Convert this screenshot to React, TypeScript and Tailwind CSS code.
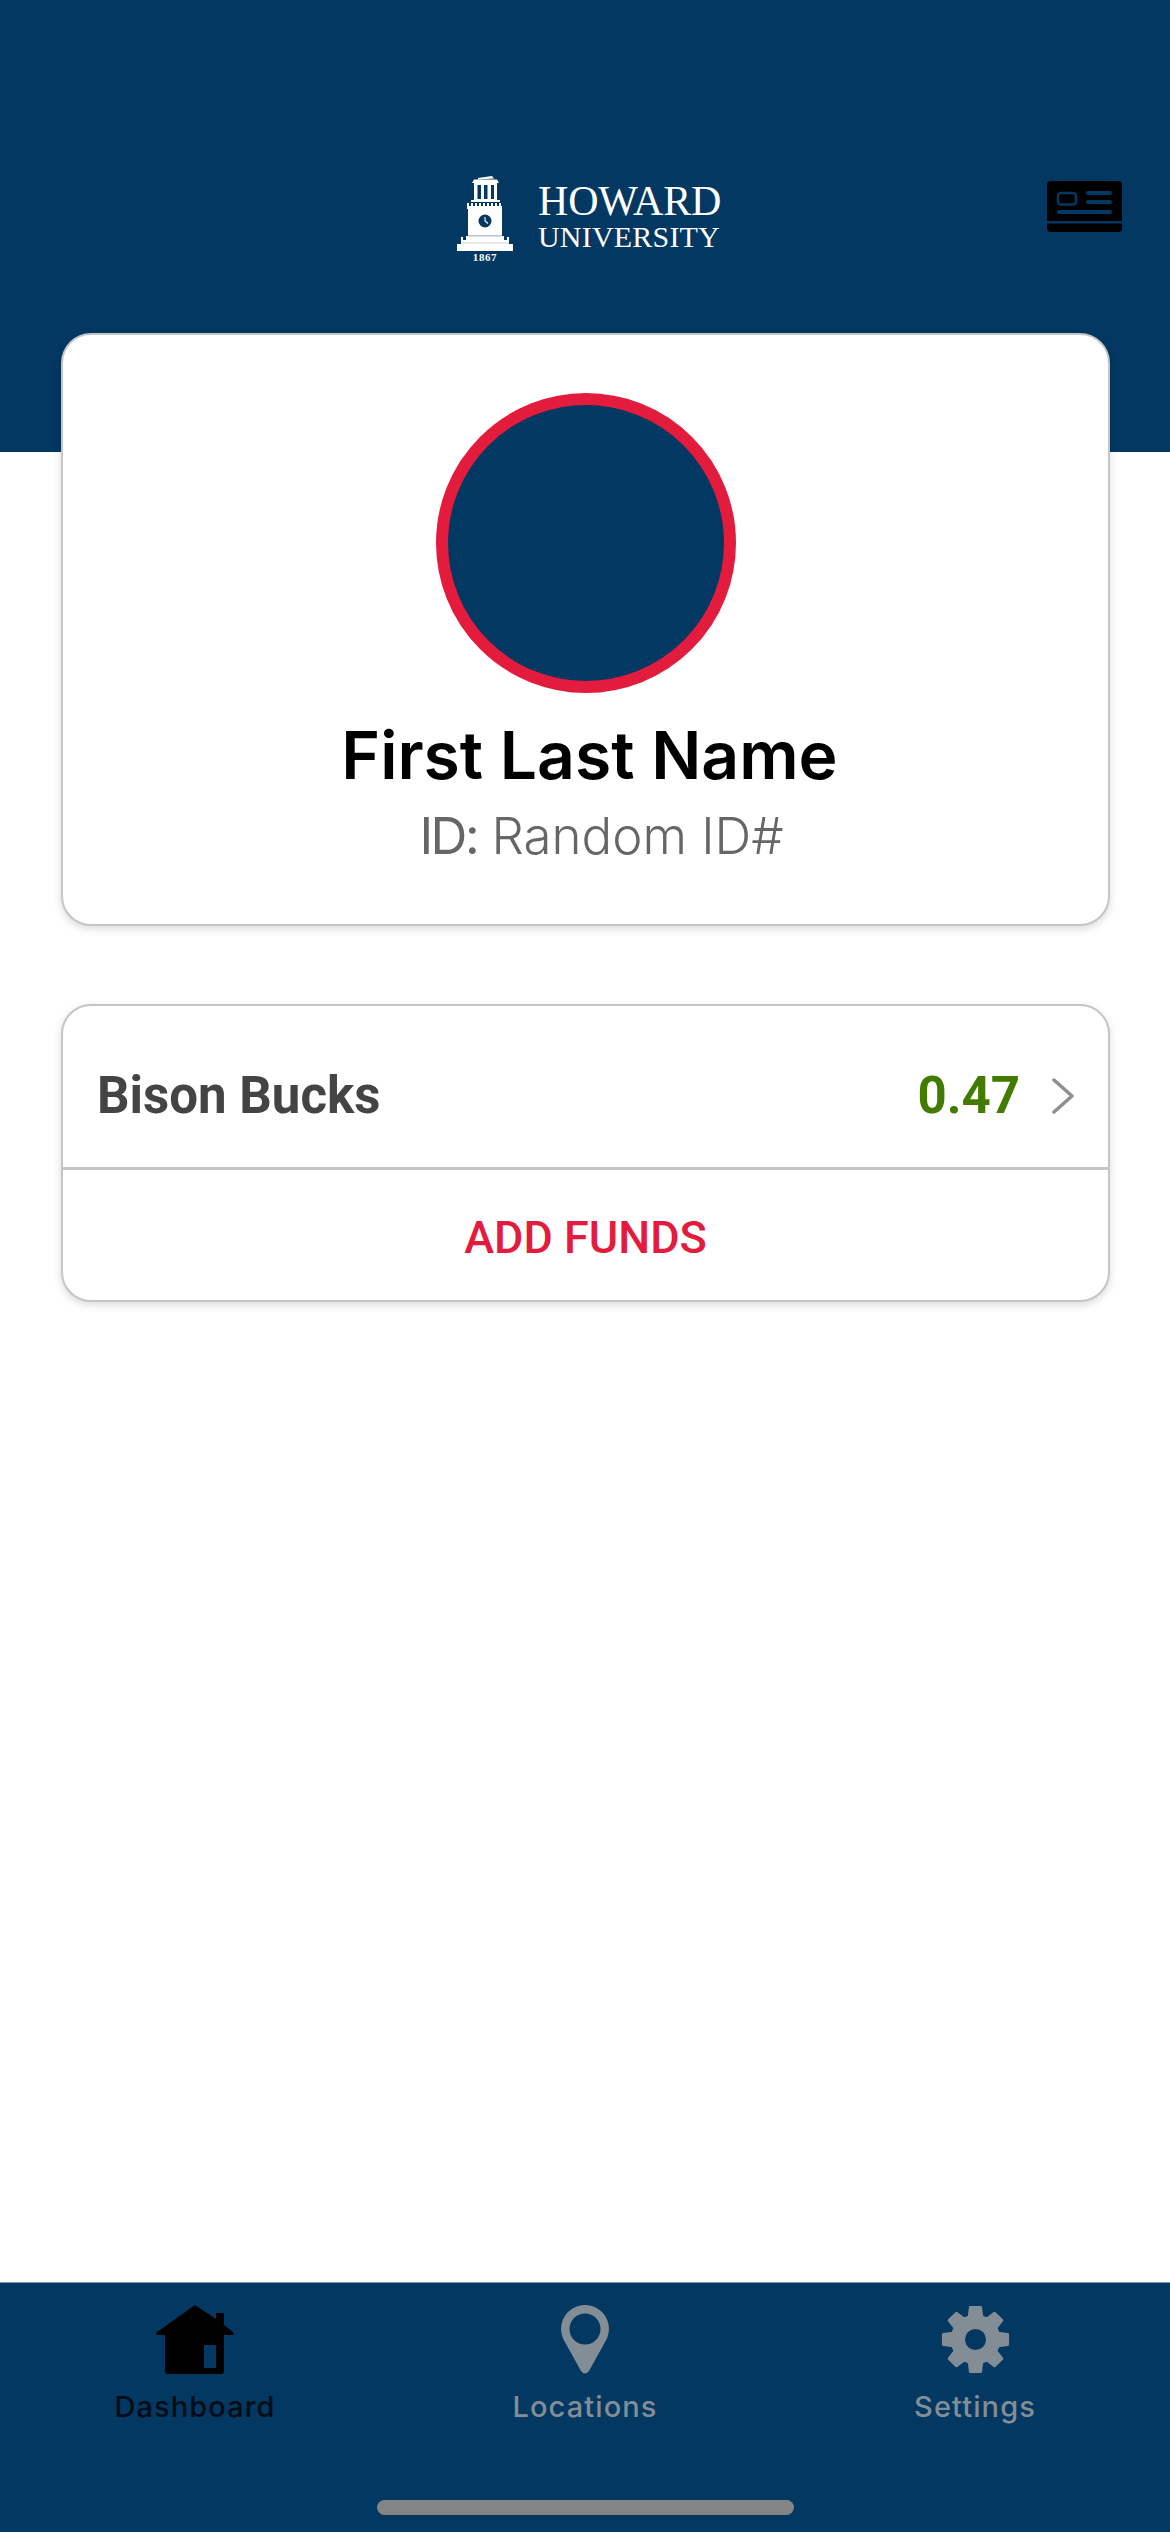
const NAVY = "#023861";

function Tower() {
  return (
    <svg width="56" height="75" viewBox="0 0 56 75" fill="#ffffff" className="block">
      <path d="M21 2 L35 0 L37 2.500 L21 3.500 Z" />
      <path d="M17 3.500 H40 L42 7 H15 Z" />
      <path fillRule="evenodd" d="M17 7 H40 V25 H17 Z M20.500 9 V23 H24 V9 Z M27 9 V23 H30.500 V9 Z M34 9 V23 H37 V9 Z" />
      <path d="M14 24h29v2H14z" />
      <path d="M10 27h2v3h-2zM14 27h2v3h-2zM18 27h2v3h-2zM22 27h2v3h-2zM26 27h2v3h-2zM30 27h2v3h-2zM34 27h2v3h-2zM38 27h2v3h-2zM42 27h2v3h-2z" />
      <path d="M10 30h35v3H10z" />
      <path fillRule="evenodd" d="M11 33 H45 V60 H47 V64 H50 V61 H52 V68 H56 V75 H0 V68 H4 V61 H6 V64 H9 V60 H11 Z M28 38.500 A6.500 6.500 0 1 0 28 51.500 A6.500 6.500 0 1 0 28 38.500 Z" />
      <path d="M28 41 V45 L31 47.500" fill="none" stroke="#ffffff" strokeWidth="1.100" />
      <path d="M11 59h34v1.500H11z" fill="#b9c6d1" />
      <path d="M4 66.500h48v1H4z" fill="#c9d3dc" />
    </svg>
  );
}

function IdIcon() {
  return (
    <svg width="75" height="51" viewBox="0 0 75 51" className="block">
      <path d="M4 0h67a4 4 0 0 1 4 4v36H0V4a4 4 0 0 1 4-4z" fill="#000000" />
      <path d="M0 42.500h75V47a4 4 0 0 1-4 4H4a4 4 0 0 1-4-4z" fill="#000000" />
      <rect x="11" y="12" width="18" height="11.500" rx="3" fill="none" stroke={NAVY} strokeWidth="2.500" />
      <rect x="39" y="10" width="26" height="4" rx="2" fill={NAVY} />
      <rect x="39" y="19" width="26" height="4" rx="2" fill={NAVY} />
      <rect x="10" y="29" width="55" height="4" rx="2" fill={NAVY} />
    </svg>
  );
}

function HomeIcon() {
  return (
    <svg width="78" height="69" viewBox="0 0 78 69" fill="#000000" className="block">
      <path fillRule="evenodd" d="M39 0 L60 14 V8 H68 V20 L77 27 Q79 30 76 30 H68 V66 Q68 69 65 69 H12 Q9 69 9 66 V30 H2 Q-1 30 1 27 Z M48 40 H60 V63 H48 Z" />
    </svg>
  );
}

function PinIcon() {
  return (
    <svg width="48" height="69" viewBox="0 0 48 69" fill="#838d96" className="block">
      <path fillRule="evenodd" d="M24 0 A24 24 0 0 1 45.500 34.500 L28 66 Q24 71 20 66 L2.500 34.500 A24 24 0 0 1 24 0 Z M24 8.500 A15.500 15.500 0 1 0 24 39.500 A15.500 15.500 0 1 0 24 8.500 Z" />
    </svg>
  );
}

function gearPath() {
  const c = 34.5;
  const pt = (r: number, deg: number) => {
    const a = ((deg - 90) * Math.PI) / 180;
    return `${(c + r * Math.cos(a)).toFixed(2)} ${(c + r * Math.sin(a)).toFixed(2)}`;
  };
  let d = "";
  for (let i = 0; i < 8; i++) {
    const t = i * 45;
    d += `${i === 0 ? "M" : "L"}${pt(23.5, t - 15.5)} L${pt(32.5, t - 9)} L${pt(32.5, t + 9)} L${pt(23.5, t + 15.5)} `;
  }
  d += "Z";
  d += ` M${c} ${c - 10} A10 10 0 1 0 ${c} ${c + 10} A10 10 0 1 0 ${c} ${c - 10} Z`;
  return d;
}

function GearIcon() {
  return (
    <svg width="69" height="69" viewBox="0 0 69 69" className="block">
      <path fillRule="evenodd" d={gearPath()} fill="#838d96" stroke="#838d96" strokeWidth="3" strokeLinejoin="round" />
      <circle cx="34.500" cy="34.500" r="10.500" fill={NAVY} />
    </svg>
  );
}

function Tab({ icon, label, color }: { icon: React.ReactNode; label: string; color: string }) {
  return (
    <div className="flex flex-col items-center">
      <div className="h-[69px] flex items-center">{icon}</div>
      <span className={`mt-[15px] text-[29px] leading-[35px] font-medium tracking-[1.100px] ${color}`}>{label}</span>
    </div>
  );
}

export default function App() {
  return (
    <div className="h-[2532px] w-[1170px] flex flex-col bg-white font-['Inter',sans-serif]">
      <header className="h-[452px] shrink-0 bg-[#023861] flex items-start justify-between pl-[457px] pr-[48px] pt-[176px]">
        <div className="flex items-start">
          <div className="flex flex-col items-center w-[56px]">
            <Tower />
            <span className="mt-[1px] font-['Liberation_Serif',serif] font-bold text-[11px] leading-[10px] text-white tracking-[0.6px]">1867</span>
          </div>
          <div className="ml-[25px] mt-[4px] flex flex-col font-['Liberation_Serif',serif] text-white">
            <span className="text-[42px] leading-[42px] tracking-[-0.200px]">HOWARD</span>
            <span className="text-[30px] leading-[30px] tracking-[0.200px]">UNIVERSITY</span>
          </div>
        </div>
        <div className="mt-[5px]">
          <IdIcon />
        </div>
      </header>

      <main className="flex-1 pl-[61px] pr-[60px] -mt-[119px]">
        <section className="h-[593px] rounded-[30px] border-2 border-[#c3c5c7] bg-white shadow-[0_3px_8px_rgba(0,0,0,0.14)] flex flex-col items-center pt-[58px]">
          <div className="w-[300px] h-[300px] rounded-full border-[12px] border-[#e31c3d] bg-[#023861]" />
          <h1 className="mt-[22px] ml-[8px] text-[66px] leading-[80px] font-semibold text-black">First Last Name</h1>
          <p className="mt-[11px] ml-[32px] text-[51px] leading-[60px] font-light text-[#666666]">
            <span className="font-normal tracking-[-2.500px]">ID:</span> Random ID#
          </p>
        </section>

        <section className="mt-[78px] h-[298px] rounded-[30px] border-2 border-[#c3c5c7] bg-white shadow-[0_3px_8px_rgba(0,0,0,0.14)] flex flex-col font-['Roboto',sans-serif]">
          <div className="h-[164px] flex items-center justify-between border-b-[3px] border-[#c3c5c7] pl-[34px] pr-[34px] pt-[19px] shrink-0">
            <span className="text-[51px] font-bold text-[#444444]">Bison Bucks</span>
            <div className="flex items-center gap-[32px]">
              <span className="text-[51px] font-bold text-[#437a00]">0.47</span>
              <svg width="22" height="36" viewBox="0 0 22 36" fill="none" stroke="#8f8f8f" strokeWidth="3.500" strokeLinecap="round" strokeLinejoin="round">
                <path d="M2 2 L20 18 L2 34" />
              </svg>
            </div>
          </div>
          <div className="flex-1 flex items-center justify-center pt-[6px]">
            <span className="text-[45px] font-medium text-[#e31c3d]">ADD FUNDS</span>
          </div>
        </section>
      </main>

      <footer className="h-[250px] shrink-0 bg-[#023861] border-t border-[#7e9ab0] flex flex-col">
        <nav className="grid grid-cols-3 pt-[22px]">
          <Tab icon={<HomeIcon />} label="Dashboard" color="text-[#020c16]" />
          <Tab icon={<PinIcon />} label="Locations" color="text-[#838d96]" />
          <Tab icon={<GearIcon />} label="Settings" color="text-[#838d96]" />
        </nav>
        <div className="mt-[76px] mx-auto w-[417px] h-[15px] rounded-full bg-[#848484]" />
      </footer>
    </div>
  );
}
